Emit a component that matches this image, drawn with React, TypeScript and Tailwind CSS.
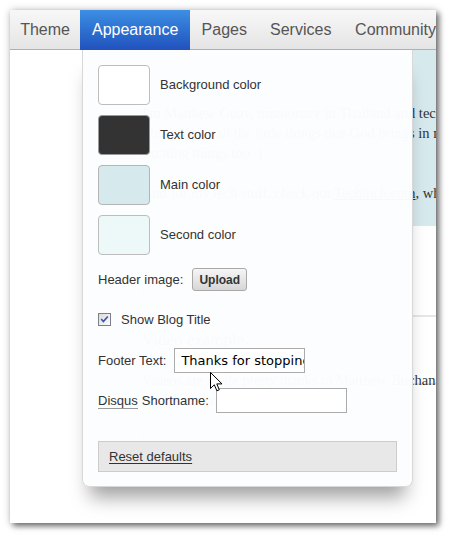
import React from "react";

const sans = { fontFamily: '"Liberation Sans", Arial, sans-serif' } as const;
const serif = { fontFamily: '"Liberation Serif", "Times New Roman", serif' } as const;

function Swatch({ color, label, border }: { color: string; label: string; border: string }) {
  return (
    <div className="flex items-center gap-[10px]">
      <div className={`w-[52px] h-[40px] rounded-[4px] border ${border} ${color}`} />
      <span className="text-[13px] text-[#333]">{label}</span>
    </div>
  );
}

function Checkbox() {
  return (
    <svg width="13" height="13" viewBox="0 0 13 13">
      <defs>
        <linearGradient id="cbg" x1="0" y1="0" x2="1" y2="1">
          <stop offset="0" stopColor="#d8d8d8" />
          <stop offset="1" stopColor="#ffffff" />
        </linearGradient>
      </defs>
      <rect x="0.5" y="0.5" width="12" height="12" fill="url(#cbg)" stroke="#7b8090" />
      <path d="M3.2 6 L5.4 8.6 L9.8 3.4" fill="none" stroke="#3a55ad" strokeWidth="1.6" />
    </svg>
  );
}

function Cursor() {
  return (
    <svg width="13" height="21" viewBox="0 0 13 21">
      <path
        d="M0.5 0.5 L0.5 16.5 L4.3 12.8 L6.9 18.8 L9.3 17.8 L6.8 11.9 L12 11.9 Z"
        fill="#fff"
        stroke="#000"
        strokeWidth="1"
      />
    </svg>
  );
}

export default function App() {
  return (
    <div className="w-[454px] h-[542px] bg-white pt-[10px] pl-[10px]" style={sans}>
      <div className="relative w-[426px] h-[513px] bg-white overflow-hidden shadow-[3px_3px_6px_rgba(0,0,0,0.55),0_0_8px_rgba(0,0,0,0.18)]">
        {/* Tab bar */}
        <div className="flex h-[40px] bg-gradient-to-b from-[#f8f8f8] to-[#e4e4e4] text-[16px] text-[#555]">
          <div className="w-[72px] flex items-center justify-center border-b border-[#b0b0b0]">Theme</div>
          <div className="w-[113px] flex items-center justify-center text-white bg-gradient-to-b from-[#3d8fe3] to-[#2251bd]">
            Appearance
          </div>
          <div className="w-[70px] flex items-center justify-center border-b border-[#b0b0b0]">Pages</div>
          <div className="w-[87px] flex items-center justify-center border-b border-[#b0b0b0]">Services</div>
          <div className="flex-1 flex items-center pl-[12px] whitespace-nowrap border-b border-[#b0b0b0]">Community</div>
        </div>

        {/* Page content behind */}
        <div className="relative">
          <div
            className="ml-[112px] h-[176px] bg-[#d6e9ec] pl-[20px] pt-[8px] text-[#333] whitespace-nowrap overflow-hidden"
            style={serif}
          >
            <div className="text-[34px] leading-[42px] text-white" style={sans}>
              A Missionary Blog
            </div>
            <div className="text-[14.5px] leading-[20px] mt-[3px]">
              <div>I'm Matthew Guay, missionary in Thailand and tech writer.</div>
              <div>I blog about all the little things that God brings in my life,</div>
              <div>exciting things too :)</div>
              <div className="mt-[20px]">
                And for my tech stuff, check out <span className="underline">Techinch.com</span>, where I write.
              </div>
            </div>
          </div>
          <div className="ml-[122px] pl-[10px] whitespace-nowrap overflow-hidden text-[#333]" style={serif}>
            <div className="pt-[61px] text-[12px] leading-[16px] text-[#bbb] tracking-wide" style={sans}>
              MARCH 23RD 2010
            </div>
            <div className="mt-[12px] h-[2px] bg-[#e6e6e6]" />
            <div className="mt-[13px] text-[17px] leading-[20px]">Video example.</div>
            <div className="mt-[20px] text-[14.5px] leading-[20px]">
              Videos are made pretty thanks to Matthew Buchanan's great
            </div>
            <div className="h-px bg-[#e6e6e6] -mt-[7px] mb-[6px]" />
            <div className="text-[14.5px] leading-[20px]">plugin for your Tumblr.</div>
            <div className="mt-[17px] text-[12px] text-[#bbb]" style={sans}>
              Posted at 7:48am
            </div>
          </div>

          {/* Dropdown panel */}
          <div className="absolute z-10 left-[72px] top-0 w-[331px] h-[437px] bg-[rgba(252,253,254,0.985)] border border-t-0 border-[#d8d8d8] rounded-b-[7px] shadow-[0_18px_18px_-8px_rgba(0,0,0,0.38)] px-[15px] pt-[15px]">
            <div className="flex flex-col gap-[10px]">
              <Swatch color="bg-white" border="border-[#bdbdbd]" label="Background color" />
              <Swatch color="bg-[#333333]" border="border-[#9a9a9a]" label="Text color" />
              <Swatch color="bg-[#d6e9ec]" border="border-[#b5b5b5]" label="Main color" />
              <Swatch color="bg-[#edf8f9]" border="border-[#bdbdbd]" label="Second color" />
            </div>

            <div className="mt-[13px] flex items-center gap-[9px] h-[23px] text-[13px] text-[#333]">
              <span>Header image:</span>
              <button className="h-[23px] w-[55px] rounded-[3px] border border-[#a9a9a9] bg-gradient-to-b from-[#f6f6f6] to-[#d6d6d6] text-[12px] font-bold text-[#333]">
                Upload
              </button>
            </div>

            <div className="mt-[22px] flex items-center gap-[10px] h-[13px] text-[13px] text-[#333]">
              <Checkbox />
              <span>Show Blog Title</span>
            </div>

            <div className="mt-[22px] flex items-center gap-[8px] h-[25px] text-[13px] text-[#333]">
              <span>Footer Text:</span>
              <div
                className="w-[131px] h-[25px] border border-[#ababab] bg-white pl-[6px] flex items-center overflow-hidden whitespace-nowrap text-[13px] text-black"
                style={{ fontFamily: '"DejaVu Sans", Verdana, sans-serif' }}
              >
                Thanks for stopping by!
              </div>
            </div>

            <div className="relative">
              <div className="absolute left-[112px] -top-[1px] z-10">
                <Cursor />
              </div>
            </div>

            <div className="mt-[15px] flex items-center h-[25px] text-[13px] text-[#333]">
              <span className="border-b border-[#9a9a9a] leading-[15px]">Disqus</span>
              <span className="ml-[4px]">Shortname:</span>
              <div className="ml-[7px] w-[131px] h-[25px] border border-[#ababab] bg-white" />
            </div>

            <div className="mt-[28px] h-[31px] border border-[#cccccc] bg-[#e8e8e8] flex items-center pl-[10px] text-[13px] text-[#333]">
              <span className="underline underline-offset-2">Reset defaults</span>
            </div>
          </div>
        </div>
      </div>
    </div>
  );
}
